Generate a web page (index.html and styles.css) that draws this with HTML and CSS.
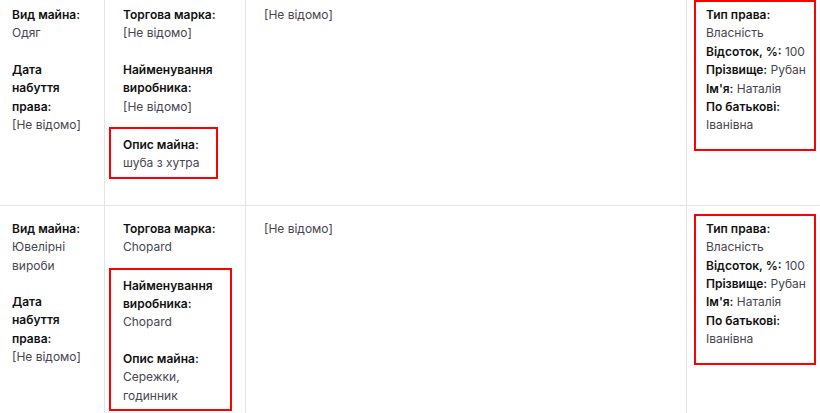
FILE: index.html
```html
<!DOCTYPE html>
<html lang="uk">
<head>
  <meta charset="UTF-8" />
  <meta name="viewport" content="width=device-width, initial-scale=1.0" />
  <title>Майно</title>
  <link rel="stylesheet" href="styles.css">
</head>
<body>

  <section class="tabla">

    <!-- Рядок 1 -->
    <div class="fila">
      <div class="celda">
        <div class="campo"><b>Вид майна:</b><br>Одяг</div>
        <div class="campo"><b>Дата набуття права:</b><br>[Не відомо]</div>
      </div>
      <div class="celda">
        <div class="campo"><b>Торгова марка:</b><br>[Не відомо]</div>
        <div class="campo"><b>Найменування виробника:</b><br>[Не відомо]</div>
        <div class="marca">
          <div class="campo"><b>Опис майна:</b><br>шуба з хутра</div>
        </div>
      </div>
      <div class="celda">
        <div class="campo">[Не відомо]</div>
      </div>
      <div class="celda">
        <div class="marca derecho">
          <div class="campo">
            <b>Тип права:</b><br>Власність<br>
            <span class="linea"><b>Відсоток, %:</b> 100</span><br>
            <span class="linea"><b>Прізвище:</b> Рубан</span><br>
            <span class="linea"><b>Ім'я:</b> Наталія</span><br>
            <b>По батькові:</b><br>Іванівна
          </div>
        </div>
      </div>
    </div>

    <!-- Рядок 2 -->
    <div class="fila">
      <div class="celda">
        <div class="campo"><b>Вид майна:</b><br>Ювелірні вироби</div>
        <div class="campo"><b>Дата набуття права:</b><br>[Не відомо]</div>
      </div>
      <div class="celda">
        <div class="campo"><b>Торгова марка:</b><br>Chopard</div>
        <div class="marca">
          <div class="campo"><b>Найменування виробника:</b><br>Chopard</div>
          <div class="campo"><b>Опис майна:</b><br>Сережки, годинник</div>
        </div>
      </div>
      <div class="celda">
        <div class="campo">[Не відомо]</div>
      </div>
      <div class="celda">
        <div class="marca derecho">
          <div class="campo">
            <b>Тип права:</b><br>Власність<br>
            <span class="linea"><b>Відсоток, %:</b> 100</span><br>
            <span class="linea"><b>Прізвище:</b> Рубан</span><br>
            <span class="linea"><b>Ім'я:</b> Наталія</span><br>
            <b>По батькові:</b><br>Іванівна
          </div>
        </div>
      </div>
    </div>

  </section>

</body>
</html>
```

FILE: styles.css
```css
body {
  background-color: #fff;
  font-family: Inter, "Noto Sans", sans-serif;
  font-size: 12px;
  line-height: 18.4px;
  color: #464650;
  margin: 0;
  overflow: hidden;
}
b {
  color: #111;
  font-weight: 600;
}

.tabla {
  margin-top: -8px;
}
.fila {
  display: grid;
  grid-template-columns: 104px 141px 441px 134px;
  border-bottom: 1px solid #e4e4e4;
}
.celda {
  padding: 7px 15px 26px 6px;
  border-left: 1px solid #e4e4e4;
}
.celda:first-child {
  padding-left: 0;
  padding-right: 6px;
  border-left: none;
}
.celda:last-child {
  padding: 8px 4px 26px 7px;
}

.campo {
  padding: 7px 12px 11px;
}

/* recuadro rojo */
.marca {
  width: fit-content;
  margin-left: -2px;
  padding-right: 5px;
  border: 2px solid #f00;
}
.marca .campo:last-child {
  padding-bottom: 4px;
}
.derecho {
  width: auto;
  margin-left: 0;
  padding-right: 0;
}
.derecho .campo,
.derecho .campo:last-child {
  padding: 4px 2px 14px 10px;
}
.linea {
  white-space: nowrap;
}
```
